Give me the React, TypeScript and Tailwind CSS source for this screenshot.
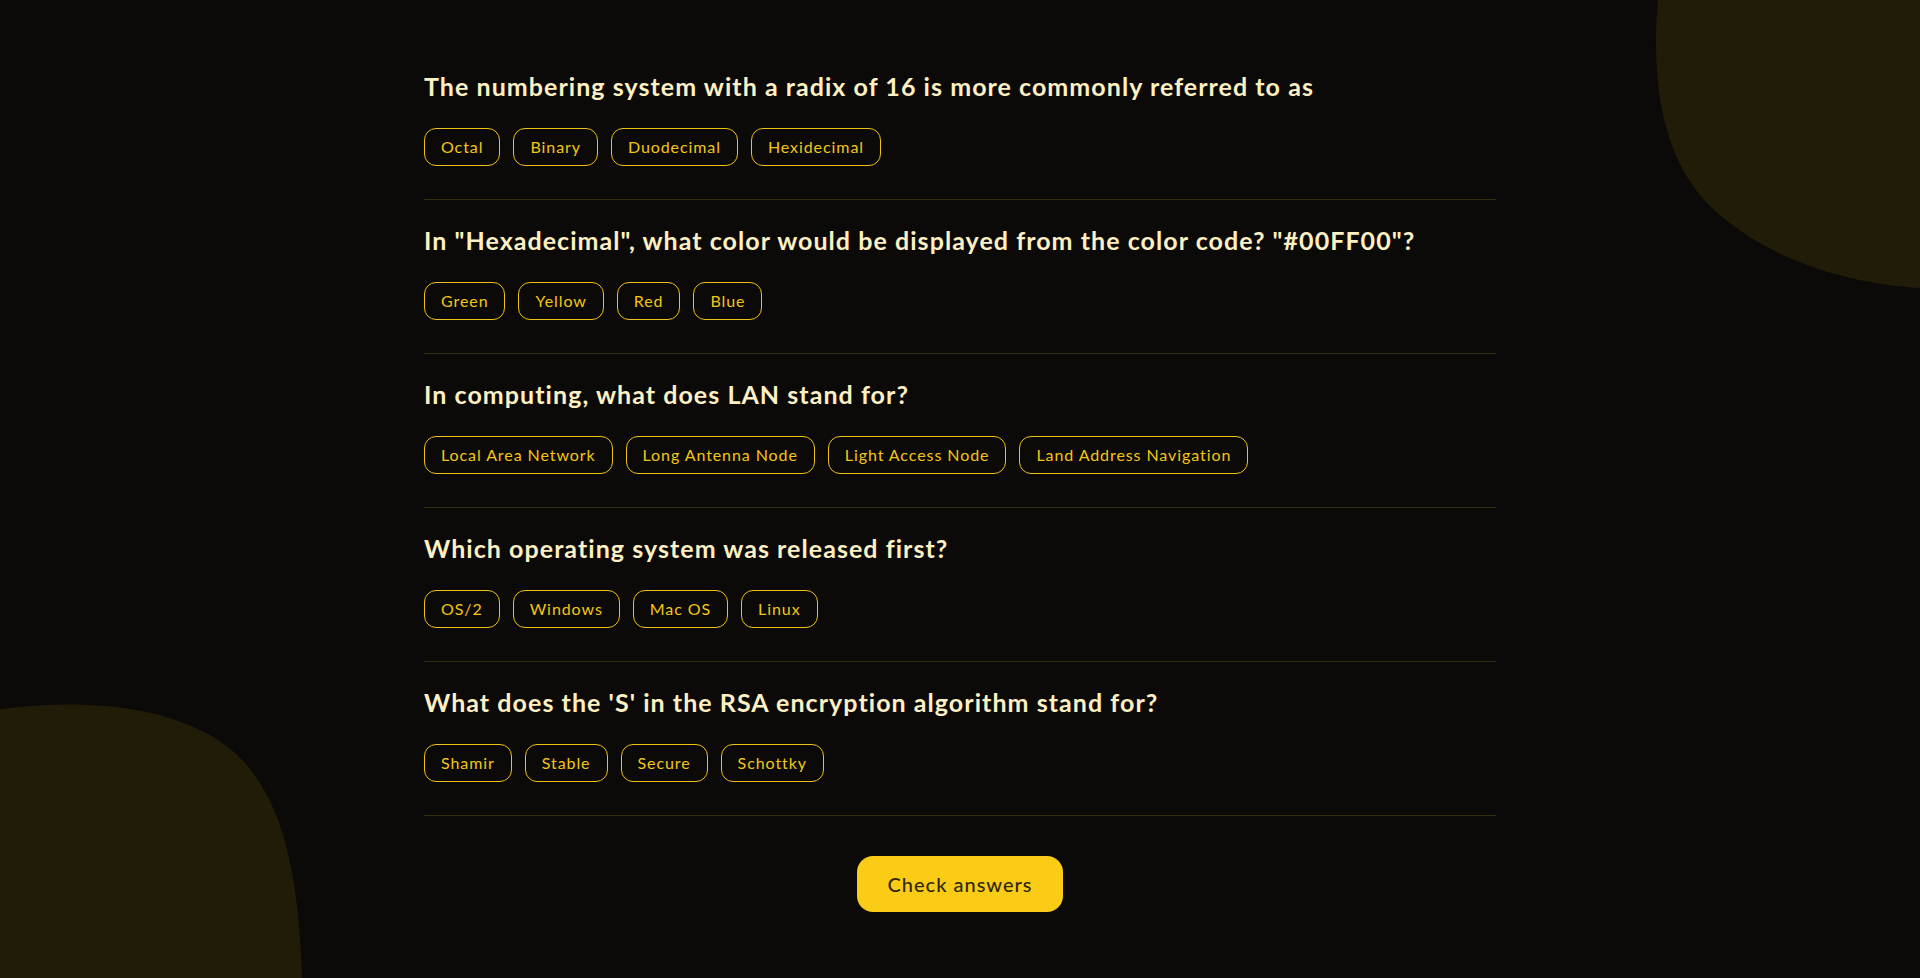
import React from "react";

const questions: { q: string; a: string[] }[] = [
  {
    q: "The numbering system with a radix of 16 is more commonly referred to as",
    a: ["Octal", "Binary", "Duodecimal", "Hexidecimal"],
  },
  {
    q: "In \"Hexadecimal\", what color would be displayed from the color code? \"#00FF00\"?",
    a: ["Green", "Yellow", "Red", "Blue"],
  },
  {
    q: "In computing, what does LAN stand for?",
    a: ["Local Area Network", "Long Antenna Node", "Light Access Node", "Land Address Navigation"],
  },
  {
    q: "Which operating system was released first?",
    a: ["OS/2", "Windows", "Mac OS", "Linux"],
  },
  {
    q: "What does the 'S' in the RSA encryption algorithm stand for?",
    a: ["Shamir", "Stable", "Secure", "Schottky"],
  },
];

export default function App() {
  return (
    <div
      className="relative min-h-[978px] w-full overflow-hidden bg-[#0b0a09]"
      style={{ fontFamily: "Lato, 'Open Sans', sans-serif" }}
    >
      <svg
        className="pointer-events-none absolute inset-0 h-[978px] w-[1920px]"
        viewBox="0 0 1920 978"
        aria-hidden="true"
      >
        <path
          d="M1658,0 C1650,90 1665,170 1720,215 C1775,262 1850,284 1920,288 L1920,0 Z"
          fill="#211c08"
        />
        <path
          d="M0,709 C70,700 150,702 210,735 C275,772 298,850 302,978 L0,978 Z"
          fill="#211c08"
        />
      </svg>
      <div className="relative mx-auto w-[1072px] pt-[46px] pb-16">
        {questions.map((item) => (
          <div key={item.q} className="border-b border-[#342d10] pt-6 pb-[33px]">
            <h2 className="text-[25px] font-bold leading-8 tracking-[1.05px] text-[#fdf0c2]">{item.q}</h2>
            <div className="mt-[26px] flex gap-[13px]">
              {item.a.map((ans) => (
                <button
                  key={ans}
                  className="rounded-xl border border-[#eec20f] px-4 py-1.5 text-base leading-6 font-normal tracking-[0.92px] text-[#f4c614]"
                >
                  {ans}
                </button>
              ))}
            </div>
          </div>
        ))}
        <div className="mt-10 flex justify-center">
          <button className="rounded-2xl bg-[#facc15] px-[30px] py-3.5 text-xl leading-7 font-medium tracking-[1px] text-[#2f2808]">
            Check answers
          </button>
        </div>
      </div>
    </div>
  );
}
